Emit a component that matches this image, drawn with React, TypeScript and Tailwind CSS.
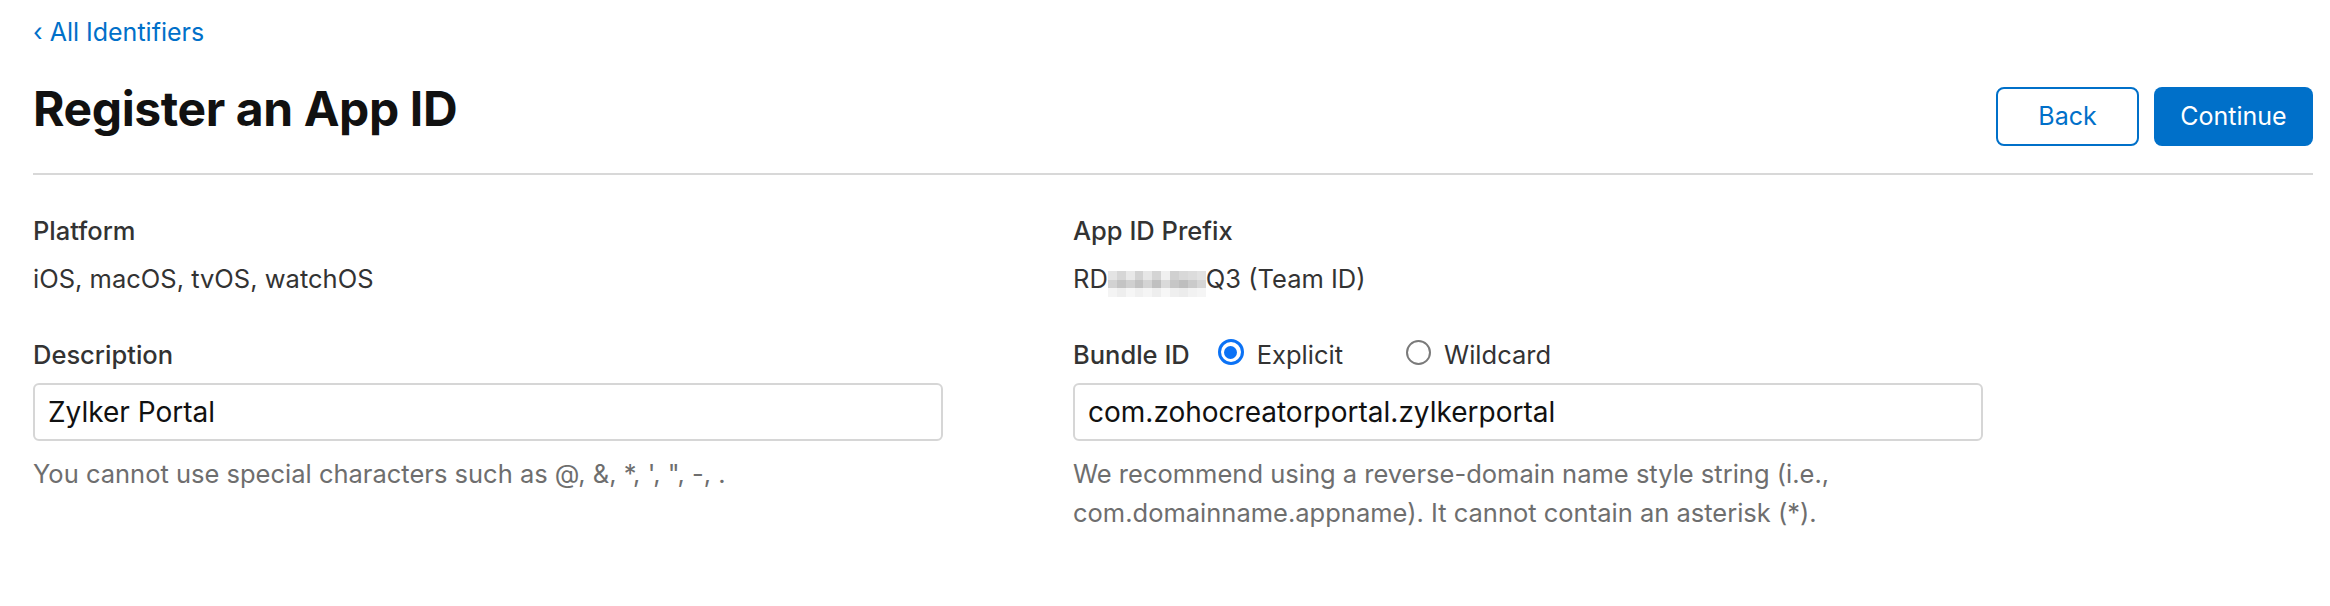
import React from "react";

// pixelated block that hides part of the team id
const MOSAIC: string[][] = [
  ["bg-[#e4e4e4]", "bg-[#d6d6d6]", "bg-[#e8e8e8]", "bg-[#d2d2d2]", "bg-[#e6e6e6]", "bg-[#d4d4d4]", "bg-[#f0f0f0]", "bg-[#d0d0d0]", "bg-[#d8d8d8]", "bg-[#dcdcdc]", "bg-[#e2e2e2]"],
  ["bg-[#d2d2d2]", "bg-[#c4c4c4]", "bg-[#d0d0d0]", "bg-[#c2c2c2]", "bg-[#d4d4d4]", "bg-[#c0c0c0]", "bg-[#dadada]", "bg-[#c6c6c6]", "bg-[#bebebe]", "bg-[#cacaca]", "bg-[#d6d6d6]"],
  ["bg-[#f4f4f4]", "bg-[#eeeeee]", "bg-[#f6f6f6]", "bg-[#f0f0f0]", "bg-[#f5f5f5]", "bg-[#eeeeee]", "bg-[#f7f7f7]", "bg-[#efefef]", "bg-[#ececec]", "bg-[#f2f2f2]", "bg-[#f5f5f5]"],
];

const Mosaic = () => (
  <span className="flex flex-col w-[98px] h-[26px] self-start mt-[7px]">
    {MOSAIC.map((row, i) => (
      <span key={i} className="flex flex-1">
        {row.map((c, j) => (
          <span key={j} className={`flex-1 ${c}`} />
        ))}
      </span>
    ))}
  </span>
);

interface RadioProps {
  label: string;
  checked?: boolean;
}

const Radio: React.FC<RadioProps> = ({ label, checked }) => (
  <div className="flex items-center gap-[13px]">
    {checked ? (
      <span className="w-[26px] h-[26px] rounded-full border-[3px] border-[#0b72f5] bg-white flex items-center justify-center mt-[-6px]">
        <span className="w-[13px] h-[13px] rounded-full bg-[#0b72f5]" />
      </span>
    ) : (
      <span className="w-[25px] h-[25px] rounded-full border-2 border-[#7a7a7a] bg-white mt-[-6px]" />
    )}
    <span className="text-[25.5px] leading-[30px] text-[#333]">{label}</span>
  </div>
);

const Label = ({ children }: { children: React.ReactNode }) => (
  <p className="text-[25.5px] leading-[30px] font-medium text-[#333]">{children}</p>
);

const TextInput = ({ value }: { value: string }) => (
  <input
    readOnly
    value={value}
    className="mt-[13px] w-[910px] h-[58px] border-2 border-[#d6d6d6] rounded-[6px] px-[13px] text-[28px] text-[#111] bg-white outline-none"
  />
);

const Hint = ({ children }: { children: React.ReactNode }) => (
  <p className="mt-[13px] w-[910px] text-[25.5px] leading-[39px] text-[#6e6e6e]">{children}</p>
);

export default function App() {
  return (
    <div className="min-h-screen bg-white font-['Inter',sans-serif] text-[#333]">
      <div className="pl-[33px] pr-[17px]">
        <a className="block pt-[17px] text-[25px] leading-[30px] text-[#0070c9]">
          ‹ All Identifiers
        </a>

        <div className="flex justify-between items-start">
          <h1 className="mt-[34px] text-[48px] leading-[56px] font-bold text-[#111] tracking-[-0.4px]">
            Register an App ID
          </h1>
          <div className="mt-[40px] flex gap-[15px]">
            <button className="w-[143px] h-[59px] border-2 border-[#0070c9] rounded-[8px] text-[25px] text-[#0070c9] bg-white">
              Back
            </button>
            <button className="w-[159px] h-[59px] rounded-[8px] text-[25px] text-white bg-[#0070c9]">
              Continue
            </button>
          </div>
        </div>

        <div className="mt-[27px] h-[2px] bg-[#d8d8d8]" />

        <div className="grid grid-cols-[1040px_1fr] pt-[41px]">
          <div>
            <Label>Platform</Label>
            <p className="mt-[18px] text-[25.5px] leading-[30px]">iOS, macOS, tvOS, watchOS</p>
            <div className="mt-[46px]">
              <Label>Description</Label>
            </div>
            <TextInput value="Zylker Portal" />
            <Hint>You cannot use special characters such as @, &amp;, *, ', ", -, .</Hint>
          </div>

          <div>
            <Label>App ID Prefix</Label>
            <p className="mt-[18px] h-[30px] flex text-[25.5px] leading-[30px]">
              <span>RD</span>
              <Mosaic />
              <span>Q3 (Team ID)</span>
            </p>
            <div className="mt-[46px] flex items-center">
              <Label>Bundle ID</Label>
              <div className="ml-[28px]">
                <Radio label="Explicit" checked />
              </div>
              <div className="ml-[63px]">
                <Radio label="Wildcard" />
              </div>
            </div>
            <TextInput value="com.zohocreatorportal.zylkerportal" />
            <Hint>
              We recommend using a reverse-domain name style string (i.e.,
              <br />
              com.domainname.appname). It cannot contain an asterisk (*).
            </Hint>
          </div>
        </div>
      </div>
    </div>
  );
}
